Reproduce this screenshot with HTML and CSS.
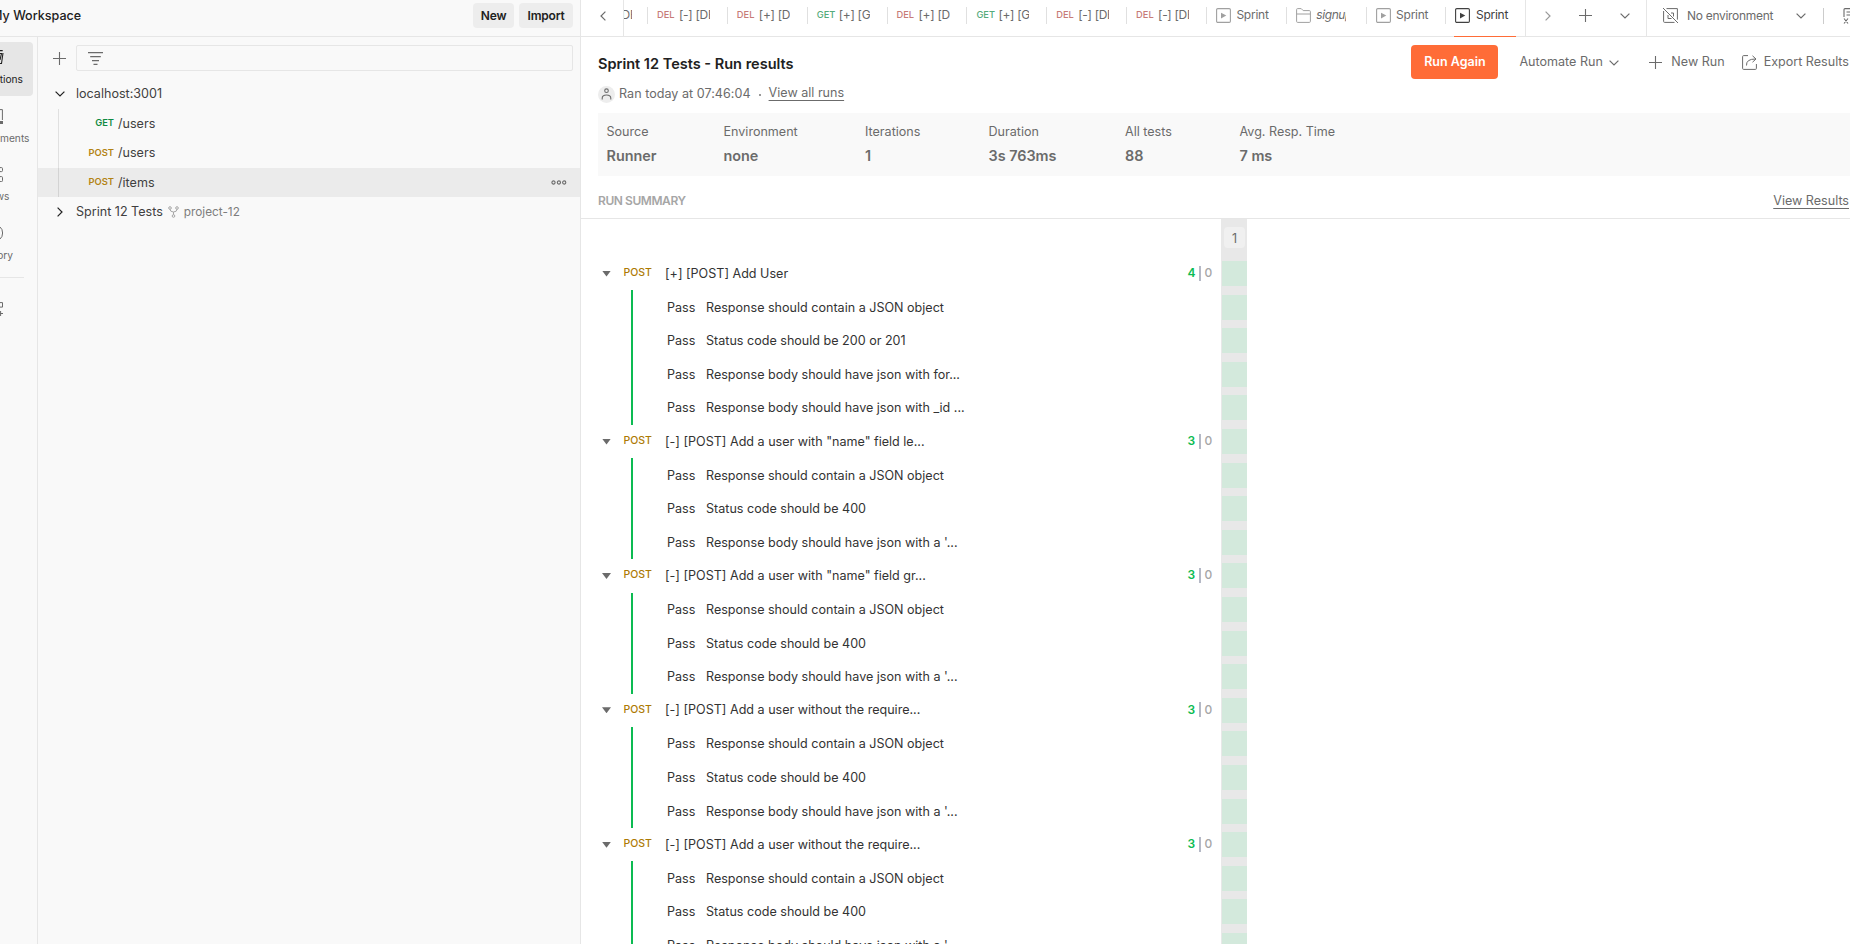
FILE: index.html
```
<!DOCTYPE html>
<html lang="en">
<head>
<meta charset="utf-8">
<title>Sprint 12 Tests - Run results</title>
<link rel="stylesheet" href="styles.css">
</head>
<body>
<svg class="defs" width="0" height="0">
  <symbol id="play" viewBox="0 0 15 15"><rect x=".6" y=".6" width="13.8" height="13.8" rx="1.2" fill="none" stroke="currentColor" stroke-width="1.1"/><path d="M5 4.7v5.8l5.3-2.9z" fill="currentColor"/></symbol>
  <symbol id="folder" viewBox="0 0 15 15"><path d="M.6 6V1.6q0-1 1-1h3.6l2 2h6.2q1 0 1 1V13.400q0 1-1 1H1.600q-1 0-1-1V6h13.800" fill="none" stroke="currentColor"/></symbol>
  <symbol id="down" viewBox="0 0 10 6"><path d="M.6.6 5 5 9.400.6" fill="none" stroke="currentColor" stroke-width="1.2"/></symbol>
  <symbol id="right" viewBox="0 0 6 10"><path d="M.6.6 5 5 .6 9.400" fill="none" stroke="currentColor" stroke-width="1.2"/></symbol>
  <symbol id="plus" viewBox="0 0 13 13"><path d="M6.500 0v13M0 6.500h13" fill="none" stroke="currentColor" stroke-width="1.1"/></symbol>
</svg>
<div class="app">
  <div class="left">
    <header class="workspace">
      <div class="ws-clip"><span class="ws-name">My Workspace</span></div>
      <button class="btn btn-new">New</button><button class="btn btn-import">Import</button>
    </header>
    <div class="left-body">
      <nav class="rail">
        <div class="rail-item active"><svg width="4" height="15"><path d="M0 .6h2.700M3 3 1.500 13.500H0M0 3.500h1.500L0 10" fill="none" stroke="currentColor" stroke-width="1.100"/></svg><span class="rail-label l1">Collections</span></div>
        <div class="rail-item"><svg width="4" height="15"><path d="M0 .6h2.400V11" fill="none" stroke="currentColor"/><path d="M0 12h3v3H0z" fill="currentColor"/></svg><span class="rail-label l2">Environments</span></div>
        <div class="rail-item"><svg width="4" height="15"><path d="M0 .6h1.500q1 0 1 1v2q0 1-1 1H0M0 9.600h1.500q1 0 1 1v3q0 1-1 1H0" fill="none" stroke="currentColor"/></svg><span class="rail-label l3">Flows</span></div>
        <div class="rail-item"><svg width="4" height="15"><path d="M0 1q2.600 2 2.600 6T0 13" fill="none" stroke="currentColor"/></svg><span class="rail-label l4">History</span></div>
        <div class="rail-line"></div>
        <div class="rail-more"><svg width="4" height="15"><path d="M0 .6h2.500v4.500H0M0 11.500h3M.6 9v5" fill="none" stroke="currentColor"/></svg></div>
      </nav>
      <aside class="side">
        <div class="side-tools"><svg class="c-grey" width="13" height="13"><use href="#plus"/></svg>
          <div class="filter"><svg width="15" height="13"><path d="M0 .6h15M2.200 4.600h10.600M4 8.600h7M5.500 12.300h4" stroke="#6b6b6b" stroke-width="1.200"/></svg></div></div>
        <div class="tree-row root"><span class="tw"><svg width="10" height="6"><use href="#down"/></svg></span>localhost:3001</div>
        <div class="kids">
          <div class="tree-row req"><b class="get">GET</b>/users</div>
          <div class="tree-row req"><b class="post">POST</b>/users</div>
          <div class="tree-row req sel"><b class="post">POST</b>/items<svg class="dots" width="16" height="5"><g fill="none" stroke="#6b6b6b" stroke-width="1.100"><circle cx="2.500" cy="2.500" r="1.600"/><circle cx="7.900" cy="2.500" r="1.600"/><circle cx="13.200" cy="2.500" r="1.600"/></g></svg></div>
        </div>
        <div class="tree-row last"><span class="tw"><svg width="6" height="10"><use href="#right"/></svg></span>Sprint 12 Tests<svg class="fork" width="11" height="12"><g fill="none" stroke="#a6a6a6"><circle cx="2" cy="2" r="1.300"/><circle cx="9" cy="2" r="1.300"/><circle cx="5.500" cy="10" r="1.300"/><path d="M2 3.300q0 2.500 3.500 2.700Q9 5.800 9 3.300M5.500 6v2.700"/></g></svg><span class="branch">project-12</span></div>
      </aside>
    </div>
  </div>
  <main class="main">
    <div class="tabs">
      <div class="tab-prev"><svg class="flip" width="6" height="10"><use href="#right"/></svg></div>
      <div class="tab-list">
        <div class="tab cut"><span class="tt"><i class="pull">[DE</i></span></div>
        <div class="tab"><b class="del">DEL</b><span class="tt">[-] [DEL</span></div>
        <div class="tab"><b class="del">DEL</b><span class="tt">[+] [DEL</span></div>
        <div class="tab"><b class="tget">GET</b><span class="tt">[+] [GET</span></div>
        <div class="tab"><b class="del">DEL</b><span class="tt">[+] [DEL</span></div>
        <div class="tab"><b class="tget">GET</b><span class="tt">[+] [GET</span></div>
        <div class="tab"><b class="del">DEL</b><span class="tt">[-] [DEL</span></div>
        <div class="tab"><b class="del">DEL</b><span class="tt">[-] [DEL</span></div>
        <div class="tab ic"><svg width="15" height="15"><use href="#play"/></svg><span class="tt">Sprint</span></div>
        <div class="tab ic"><svg width="15" height="15"><use href="#folder"/></svg><span class="tt it">signup</span></div>
        <div class="tab ic"><svg width="15" height="15"><use href="#play"/></svg><span class="tt">Sprint</span></div>
        <div class="tab ic on"><svg width="15" height="15"><use href="#play"/></svg><span class="tt">Sprint</span></div>
      </div>
      <div class="tab-ctl">
        <svg class="dim" width="6" height="10"><use href="#right"/></svg>
        <svg width="13" height="13"><use href="#plus"/></svg>
        <svg width="10" height="6"><use href="#down"/></svg>
      </div>
      <div class="env">
        <svg width="15" height="15"><path d="M3.500.6h10.900v11M11.500 14.400H1.600q-1 0-1-1V3M0 0l15 15M5 7v3.500h3.500M8 5h2.500v3.500" fill="none" stroke="#6b6b6b"/></svg>
        <span class="env-name">No environment</span>
        <svg width="10" height="6"><use href="#down"/></svg>
        <i class="env-sep"></i>
        <svg width="8" height="16"><path d="M8 .6H2q-1 0-1 1V9M3.500 4H8M3.500 7H8M1 10.500l4 5M5 10.500l-4 5M7 15h1" fill="none" stroke="#6b6b6b" stroke-width="1.100"/></svg>
      </div>
    </div>
    <section class="head">
      <div class="head-info">
        <h1>Sprint 12 Tests - Run results</h1>
        <div class="ran"><span class="avatar"><svg width="11" height="12"><g fill="none" stroke="#6b6b6b" stroke-width="1.100"><circle cx="5.500" cy="2.700" r="1.800"/><path d="M1.200 11.500V10.200q0-3.200 4.300-3.200t4.300 3.200v1.300"/></g></svg></span><span class="when">Ran today at 07:46:04</span><i class="mid"></i><a class="all">View all runs</a></div>
      </div>
      <div class="actions">
        <button class="again">Run Again</button>
        <span class="auto">Automate Run</span><svg class="a1" width="10" height="6"><use href="#down"/></svg>
        <svg class="a2" width="13" height="13"><use href="#plus"/></svg><span>New Run</span>
        <svg class="a3" width="15" height="15"><path d="M6 .6H1.600q-1 0-1 1v11.800q0 1 1 1h11.800q1 0 1-1V9M4.500 10.500Q4 4 13.500 4M10.500.8 14 4l-3.500 3.200" fill="none" stroke="#6b6b6b"/></svg><span>Export Results</span>
      </div>
    </section>
    <section class="stats">
      <div><span>Source</span><b>Runner</b></div>
      <div><span>Environment</span><b>none</b></div>
      <div><span>Iterations</span><b>1</b></div>
      <div><span>Duration</span><b>3s 763ms</b></div>
      <div><span>All tests</span><b>88</b></div>
      <div><span>Avg. Resp. Time</span><b>7 ms</b></div>
    </section>
    <div class="summary"><span class="sum-title">RUN SUMMARY</span><a>View Results</a></div>
    <div class="results">
      <div class="iter-head"><div class="iter"><span>1</span></div></div>
      <div id="rows"></div>
    </div>
  </main>
</div>
<script src="app.js"></script>
</body>
</html>
```
FILE: app.js
```
const json = 'Response should contain a JSON object';
const bad = [json, 'Status code should be 400', "Response body should have json with a '..."];
const groups = [
  ['[+] [POST] Add User', [json, 'Status code should be 200 or 201', 'Response body should have json with for...', 'Response body should have json with _id ...']],
  ['[-] [POST] Add a user with "name" field le...', bad],
  ['[-] [POST] Add a user with "name" field gr...', bad],
  ['[-] [POST] Add a user without the require...', bad],
  ['[-] [POST] Add a user without the require...', bad]
];
const cell = '<div class="cell"><i></i></div>';
document.getElementById('rows').innerHTML = groups.map(([name, tests]) =>
  `<div class="row group"><i class="tri"></i><b class="method">POST</b><span class="name">${name}</span><span class="count"><b>${tests.length}</b><i></i><em>0</em></span>${cell}</div>` +
  `<div class="tests">${tests.map(t => `<div class="row test"><span class="pass">Pass</span><span class="desc">${t}</span>${cell}</div>`).join('')}</div>`
).join('');
```
FILE: styles.css
```
* { box-sizing: border-box; }
body { margin: 0; height: 944px; overflow: hidden; background: #fff; color: #6b6b6b; font: 400 12.57px/20px Inter, sans-serif; }
svg { display: block; flex: none; }
i { font-style: normal; }
a { text-decoration: underline; text-underline-offset: 3px; }
button { border: 0; font-family: inherit; padding: 0; }
.defs { position: absolute; }
.app { display: flex; width: 1850px; height: 944px; overflow: hidden; }
.left { width: 581px; flex: none; display: flex; flex-direction: column; background: #f9f9f9; border-right: 1px solid #e6e6e6; }
.workspace { height: 37px; flex: none; display: flex; align-items: flex-start; padding-top: 3px; border-bottom: 1px solid #e6e6e6; }
.ws-clip { width: 473px; display: flex; overflow: hidden; padding-top: 3px; }
.ws-name { margin-left: -9px; color: #212121; font-weight: 500; font-size: 12.57px; white-space: nowrap; }
.btn { height: 25px; border-radius: 4px; background: #ededed; color: #212121; font-weight: 600; font-size: 12px; letter-spacing: -.2px; padding-bottom: 1px; }
.btn-new { width: 41px; margin-right: 5px; }
.btn-import { width: 54px; }
.left-body { flex: 1; display: flex; }
.rail { width: 38px; flex: none; border-right: 1px solid #e6e6e6; padding-top: 5px; overflow: hidden; }
.rail-item { height: 54px; margin-bottom: 4.700px; padding-top: 8px; width: 33px; border-radius: 0 4px 4px 0; }
.rail-item.active { background: #e6e6e6; color: #212121; }
.rail-label { display: flex; justify-content: flex-end; height: 14px; margin-top: 7px; font-size: 10.200px; line-height: 14px; white-space: nowrap; }
.l1 { width: 23px; } .l2 { width: 29.500px; } .l3 { width: 9.500px; } .l4 { width: 13px; }
.rail-line { width: 24px; height: 1px; background: #e6e6e6; margin: 0 0 24px; }
.side { flex: 1; }
.side-tools { display: flex; align-items: center; padding: 8px 7px 0 15px; gap: 10px; }
.filter { flex: 1; height: 26px; border: 1px solid #e6e6e6; border-radius: 2px; padding: 6px 11px; }
.tree-row { display: flex; align-items: center; color: #404040; height: 29.500px; }
.root { margin-top: 8px; }
.tw { width: 38px; padding-left: 17px; color: #212121; }
.last .tw { padding-left: 19px; }
.kids { background: linear-gradient(#e0e0e0, #e0e0e0) 20px 0 / 1px 100% no-repeat; }
.req { padding-top: 1px; }
.req b { width: 76px; margin-right: 4px; text-align: right; font-size: 9.350px; font-weight: 600; padding-bottom: 1px; }
.sel { background: rgba(0,0,0,.055); }
.dots { margin-left: auto; margin-right: 13px; }
.get { color: #108a41; } .post { color: #b38313; }
.fork { margin: 0 5px; }
.branch { font-size: 11.800px; color: #7d7d7d; }
.main { flex: 1; min-width: 0; }
.tabs { height: 37px; display: flex; border-bottom: 1px solid #e6e6e6; }
.tab-prev { width: 43px; flex: none; padding: 11px 0 0 19px; border-right: 1px solid #e6e6e6; }
.flip { transform: scaleX(-1); }
.tab-list { width: 902px; flex: none; display: flex; border-right: 1px solid #e6e6e6; }
.tab { width: 79.850px; height: 37px; flex: none; display: flex; padding: 5px 0 0 10px; background: linear-gradient(#e0e0e0, #e0e0e0) 0 7px / 1px 17px no-repeat; }
.tab.cut { width: 23px; padding: 5px 0 0; background: none; }
.cut .tt { width: 8px; }
.pull { display: inline-block; margin-left: -6.500px; }
.tab b { width: 22px; flex: none; font-size: 9.300px; font-weight: 500; }
.tt { width: 31px; height: 20px; overflow: hidden; white-space: nowrap; font-size: 12px; letter-spacing: -.3px; }
.del { color: #c77b77; } .tget { color: #55ab7b; }
.ic svg { color: #a0a0a0; margin-top: 3px; margin-right: 5.500px; }
.ic .tt { width: 33px; letter-spacing: -.25px; }
.ic .it { font-style: italic; width: 30px; letter-spacing: -.4px; }
.on { position: relative; }
.on::after { content: ""; position: absolute; left: 9px; top: 36px; width: 62px; height: 1px; background: #ff6c37; }
.on svg, .on .tt { color: #404040; }
.tab-ctl { width: 121px; flex: none; height: 36px; display: flex; align-items: center; gap: 28px; padding: 0 0 5px 19px; border-right: 1px solid #e6e6e6; }
.dim { color: #999; }
.env { flex: 1; height: 36px; display: flex; align-items: center; padding: 0 0 5px 16px; }
.env-name { width: 109px; margin-left: 9px; font-size: 12px; letter-spacing: -.3px; white-space: nowrap; }
.env-sep { width: 1px; height: 16px; background: #ccc; margin: 0 19px 0 17px; }
.head { height: 76px; display: flex; justify-content: space-between; padding: 8px 0 0 17px; }
.head-info { padding-top: 9px; }
h1 { margin: 0; font-size: 14.530px; font-weight: 600; line-height: 20px; color: #212121; }
.ran { display: flex; align-items: center; height: 20px; margin-top: 10px; }
.when { letter-spacing: .03px; }
.all { margin-top: -2px; }
.avatar { width: 17px; height: 17px; border-radius: 50%; background: #ededed; display: grid; place-items: center; margin-right: 4px; }
.mid { width: 2px; height: 2px; background: #999; margin: 2px 8px 0; }
.actions { display: flex; align-items: center; height: 34px; white-space: nowrap; margin-right: 1px; }
.again { width: 87px; height: 34px; border-radius: 4px; background: #ff6c37; color: #fff; font-weight: 600; font-size: 12.500px; margin-right: 21px; padding-bottom: 1px; }
.a1 { margin: 1px 30.500px 0 6px; }
.a2 { margin-right: 9px; }
.a3 { margin: 0 7px 0 17px; }
.stats { height: 63px; margin-left: 17px; background: #f9f9f9; display: grid; grid-template-columns: 117px 141.500px 123.500px 136.500px 114.500px 1fr; padding: 9px 0 0 8.500px; }
.stats div { display: flex; flex-direction: column; gap: 4px; }
.stats b { font-size: 14.400px; font-weight: 600; }
.summary { height: 43px; display: flex; justify-content: space-between; align-items: flex-start; padding: 15px 1px 0 17px; border-bottom: 1px solid #e6e6e6; }
.sum-title { font-size: 12px; font-weight: 600; letter-spacing: -.43px; color: #a6a6a6; }
.iter-head { height: 37.800px; display: flex; padding-left: 640px; }
.iter { width: 26px; background: #e8e8e8; padding: 8px 2px 0 3px; }
.iter span { display: block; height: 21px; line-height: 23px; border-radius: 4px; background: #f0f0f0; text-align: center; }
.row { height: 33.600px; display: flex; align-items: center; color: #333; white-space: nowrap; }
.group { padding-left: 21px; }
.tri { width: 9px; height: 6px; background: #6b6b6b; clip-path: polygon(0 0, 100% 0, 50% 100%); margin-right: 12.500px; }
.method { width: 41.500px; font-size: 10.500px; font-weight: 500; color: #ad7a03; padding-bottom: 1.500px; }
.name { width: 522.500px; }
.count { width: 33.500px; display: flex; align-items: center; font-size: 12px; padding-bottom: 1px; }
.count b { color: #0cbb52; font-weight: 600; width: 11px; }
.count i { width: 2px; height: 15px; background: #b5b9c6; margin-right: 4px; }
.count em { font-style: normal; color: #a6a6a6; font-weight: 500; }
.cell { width: 26px; height: 100%; background: #e8e8e8; display: flex; align-items: center; padding-left: 1px; }
.cell i { width: 25px; height: 25px; background: #d3e9dc; }
.tests { background: linear-gradient(#0cbb52, #0cbb52) 50px 0 / 2px 100% no-repeat; }
.test { padding-left: 86px; }
.pass { width: 39px; padding-top: 1px; }
.desc { width: 515px; padding-top: 1px; }
```
